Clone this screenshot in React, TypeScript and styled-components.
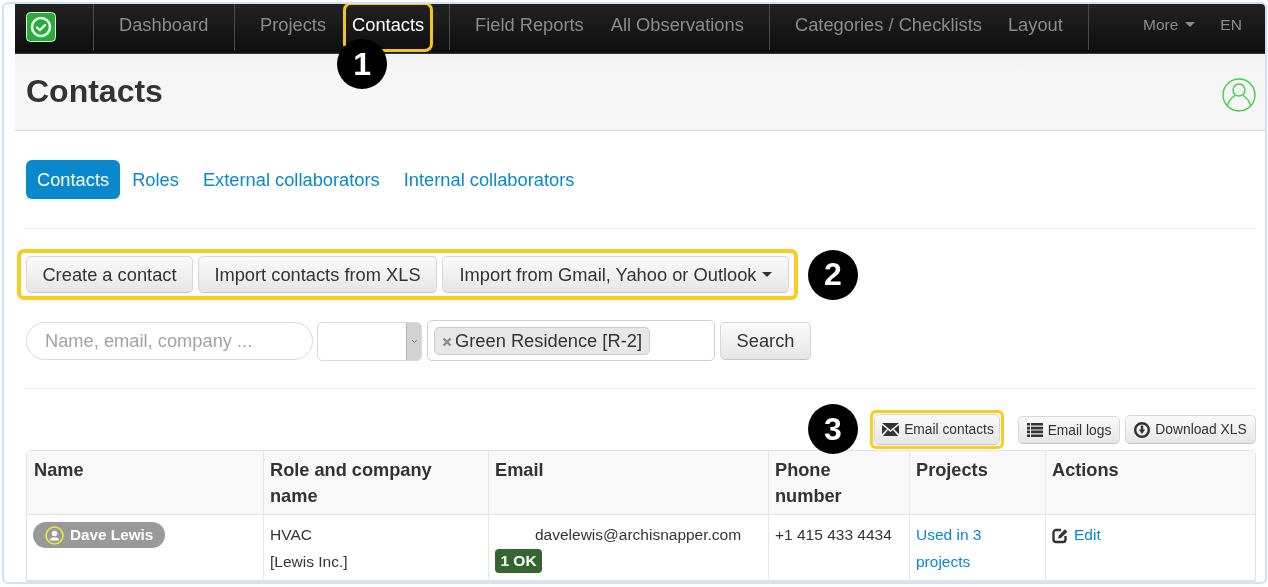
import React from "react";
import styled, { createGlobalStyle } from "styled-components";

const Global = createGlobalStyle`
  html, body { margin: 0; padding: 0; background: #fff; overflow: hidden; }
  body { font-family: "Liberation Sans", Arial, sans-serif; color: #333; }
  * { box-sizing: border-box; }
`;

const Frame = styled.div`
  margin: 2px 1px 0 2px;
  height: 582px;
  border: 2px solid #cfe2f9;
  border-radius: 6px;
  padding-left: 11px;
  overflow: hidden;
  background: #fff;
  filter: blur(0.3px);
`;

const NavBar = styled.nav`
  height: 50px;
  display: flex;
  align-items: stretch;
  background: linear-gradient(#222222, #0e0e0e);
  border-bottom: 1px solid #3a3a3a;
  font-size: 18.3px;
`;

const Brand = styled.div`
  width: 78px;
  padding: 8px 0 0 11px;
  flex: none;
`;

const NavGroup = styled.div<{ $w: number; $pad: number; $gap?: number }>`
  width: ${(p) => p.$w}px;
  flex: none;
  display: flex;
  gap: ${(p) => p.$gap ?? 0}px;
  padding: 0 0 4px ${(p) => p.$pad}px;
  height: 46px;
  align-items: center;
  border-left: 1px solid #4a4a4a;
`;

const NavLink = styled.a<{ $active?: boolean; $small?: boolean }>`
  color: ${(p) => (p.$active ? "#fff" : "#8c8c8c")};
  font-size: ${(p) => (p.$small ? "15.5px" : "inherit")};
  white-space: nowrap;
  position: relative;
`;

const HighlightedNav = styled.div`
  position: relative;
  height: 50px;
  width: 90px;
  margin-top: 4px;
  border: 3px solid #f5c518;
  border-radius: 8px;
  display: flex;
  align-items: center;
  padding: 0 0 4px 6px;
  flex: none;
`;

const Marker = styled.div`
  width: 50px;
  height: 50px;
  flex: none;
  border-radius: 50%;
  background: #000;
  color: #fff;
  font-size: 32px;
  font-weight: 700;
  display: flex;
  align-items: center;
  justify-content: center;
`;

const FloatingMarker = styled(Marker)`
  position: absolute;
  left: -9px;
  top: 34px;
  z-index: 3;
`;

const Caret = styled.span<{ $color: string; $flush?: boolean }>`
  display: inline-block;
  width: 0;
  height: 0;
  margin-left: ${(p) => (p.$flush ? 0 : 7)}px;
  vertical-align: 3px;
  border-left: 5px solid transparent;
  border-right: 5px solid transparent;
  border-top: 5px solid ${(p) => p.$color};
`;

const TitleBar = styled.header`
  height: 77px;
  background: linear-gradient(#f1f1f1, #f6f6f6 14px);
  border-bottom: 1px solid #d6d6d6;
  display: flex;
  align-items: flex-start;
  justify-content: space-between;
  padding: 17px 9px 0 11px;
`;

const Title = styled.h1`
  margin: 0;
  font-size: 32px;
  line-height: 40px;
  font-weight: 700;
  color: #333;
`;

const AvatarIcon = styled.svg`
  margin-top: 7px;
  width: 34px;
  height: 34px;
  color: #3fd03f;
`;

const Content = styled.main`
  padding: 29px 9px 0 11px;
`;

const Tabs = styled.div`
  display: flex;
  align-items: center;
  gap: 24px;
  height: 39px;
  font-size: 18.3px;
`;

const Tab = styled.a<{ $active?: boolean }>`
  color: ${(p) => (p.$active ? "#fff" : "#0a88cc")};
  background: ${(p) => (p.$active ? "#0a88cc" : "transparent")};
  padding: ${(p) => (p.$active ? "0 11px" : "0")};
  margin-right: ${(p) => (p.$active ? "-12px" : "0")};
  height: 39px;
  line-height: 40px;
  border-radius: 6px;
`;

const Rule = styled.hr<{ $top: number }>`
  margin: ${(p) => p.$top}px 0 0;
  border: none;
  border-top: 1px solid #ececec;
`;

const ActionRow = styled.div`
  display: flex;
  align-items: center;
  gap: 10px;
  margin: 20px 0 0 -9px;
`;

const HighlightBox = styled.div`
  display: flex;
  gap: 5px;
  height: 51px;
  padding: 3px 4px 0 5px;
  border: 4px solid #fbcb22;
  border-radius: 7px;
  width: 781px;
`;

const Button = styled.button<{ $w?: number; $h?: number; $size?: number }>`
  width: ${(p) => (p.$w ? `${p.$w}px` : "auto")};
  height: ${(p) => p.$h ?? 37}px;
  flex: none;
  padding: 0;
  border: 1px solid #d8d8d8;
  border-bottom-color: #c4c4c4;
  border-radius: 5px;
  background: linear-gradient(#fafafa, #e6e6e6);
  color: #333;
  font-family: inherit;
  font-size: ${(p) => p.$size ?? 18.3}px;
  display: inline-flex;
  align-items: center;
  justify-content: center;
  gap: 5px;
  white-space: nowrap;
`;

const SearchButton = styled(Button)`
  margin-left: 5px;
`;

const SearchRow = styled.div`
  display: flex;
  align-items: center;
  margin-top: 20px;
  height: 42px;
`;

const SearchInput = styled.div`
  width: 287px;
  height: 38px;
  border: 1px solid #d9d9d9;
  border-radius: 19px;
  padding-left: 18px;
  line-height: 36px;
  font-size: 18.3px;
  color: #a3a3a3;
`;

const SelectBox = styled.div`
  width: 105px;
  height: 39px;
  margin-left: 4px;
  border: 1px solid #d9d9d9;
  border-radius: 5px;
  display: flex;
  justify-content: flex-end;
  overflow: hidden;
`;

const SelectArrow = styled.div`
  width: 15px;
  background: #d2d2d2;
  border-left: 1px solid #b8b8b8;
  display: flex;
  align-items: center;
  justify-content: center;
  color: #777;
`;

const TagInput = styled.div`
  width: 288px;
  height: 41px;
  margin: -1px 0 0 5px;
  border: 1px solid #cfcfcf;
  border-radius: 5px;
  padding: 6px 0 0 6px;
`;

const Tag = styled.div`
  display: inline-flex;
  align-items: center;
  gap: 3px;
  height: 28px;
  width: 216px;
  padding: 0 0 1px 7px;
  background: #e7e7e7;
  border: 1px solid #cccccc;
  border-radius: 5px;
  font-size: 18.3px;
  white-space: nowrap;
`;

const TagClose = styled.svg`
  width: 10px;
  height: 10px;
  margin-top: 2px;
  color: #8a8a8a;
`;

const Toolbar = styled.div`
  display: flex;
  align-items: center;
  justify-content: flex-end;
  margin-top: 20px;
  height: 40px;
`;

const MailHighlight = styled.div`
  width: 134px;
  height: 39px;
  margin: 0 14px 0 12px;
  border: 3px solid #fbcb22;
  border-radius: 6px;
  padding: 1px;
`;

const MailButton = styled(Button)`
  width: 100%;
  height: 31px;
  padding: 1px 0 0 2px;
`;

const LogsButton = styled(Button)`
  margin-top: 2px;
`;

const DownloadButton = styled(Button)`
  margin: 1px 0 0 5px;
`;

const Table = styled.table`
  width: 1230px;
  margin-top: 1px;
  border-collapse: separate;
  border-spacing: 0;
  table-layout: fixed;
  border: 1px solid #e3e3e3;
  border-radius: 5px 5px 0 0;
  font-size: 15.5px;
`;

const Th = styled.th`
  height: 64px;
  padding: 6px 20px 0 6px;
  background: #f8f8f8;
  border-left: 1px solid #e6e6e6;
  border-bottom: 1px solid #e3e3e3;
  font-size: 18.2px;
  line-height: 26px;
  font-weight: 700;
  text-align: left;
  vertical-align: top;
  &:first-child { border-left: none; padding-left: 7px; }
`;

const Td = styled.td`
  height: 66px;
  padding: 7px 20px 0 6px;
  border-left: 1px solid #e6e6e6;
  border-bottom: 1px solid #e3e3e3;
  line-height: 26.6px;
  vertical-align: top;
  &:first-child { border-left: none; }
`;

const PhoneCell = styled(Td)`
  padding-right: 0;
  white-space: nowrap;
`;

const UserPill = styled.span`
  display: inline-flex;
  align-items: center;
  gap: 6px;
  height: 26px;
  width: 132px;
  padding-left: 12px;
  background: #999;
  border-radius: 13px;
  color: #fff;
  font-weight: 700;
  font-size: 15.3px;
`;

const EmailLine = styled.div`
  padding-left: 40px;
  white-space: nowrap;
`;

const StatusBadge = styled.span`
  display: block;
  width: 47px;
  height: 24px;
  border-radius: 4px;
  background: #34672f;
  color: #fff;
  font-weight: 700;
  font-size: 15.5px;
  line-height: 24px;
  text-align: center;
`;

const TableLink = styled.a`
  color: #0a88cc;
`;

const EditIcon = styled.svg`
  width: 17px;
  height: 17px;
  margin-right: 5px;
  vertical-align: -4px;
`;

const Logo = () => (
  <svg width="30" height="30" viewBox="0 0 30 30">
    <rect x="0.5" y="0.5" width="29" height="29" rx="4" fill="#28ad3a" stroke="#dfe9df" />
    <circle cx="15" cy="15" r="9" fill="none" stroke="#eef7ee" strokeWidth="2.6" />
    <path d="M11 15.5l2.8 2.6 5.2-5" fill="none" stroke="#fff" strokeWidth="2.2" strokeLinecap="round" strokeLinejoin="round" />
  </svg>
);

export default function App() {
  return (
    <>
      <Global />
      <Frame>
        <NavBar>
          <Brand><Logo /></Brand>
          <NavGroup $w={141} $pad={25}><NavLink>Dashboard</NavLink></NavGroup>
          <NavGroup $w={215} $pad={25} $gap={17}>
            <NavLink>Projects</NavLink>
            <HighlightedNav>
              <NavLink $active>Contacts</NavLink>
              <FloatingMarker>1</FloatingMarker>
            </HighlightedNav>
          </NavGroup>
          <NavGroup $w={320} $pad={25} $gap={27}>
            <NavLink>Field Reports</NavLink>
            <NavLink>All Observations</NavLink>
          </NavGroup>
          <NavGroup $w={319} $pad={25} $gap={26}>
            <NavLink>Categories / Checklists</NavLink>
            <NavLink>Layout</NavLink>
          </NavGroup>
          <NavGroup $w={177} $pad={54} $gap={25}>
            <NavLink $small>More<Caret $color="#8c8c8c" /></NavLink>
            <NavLink $small>EN</NavLink>
          </NavGroup>
        </NavBar>
        <TitleBar>
          <Title>Contacts</Title>
          <AvatarIcon viewBox="0 0 34 34" fill="none" stroke="currentColor" strokeWidth="1.4">
            <circle cx="17" cy="17" r="16" />
            <circle cx="17" cy="12" r="6" />
            <path d="M5.5 28c1-6 5-9 7.5-10.5M28.5 28c-1-6-5-9-7.5-10.5" />
          </AvatarIcon>
        </TitleBar>
        <Content>
          <Tabs>
            <Tab $active>Contacts</Tab>
            <Tab>Roles</Tab>
            <Tab>External collaborators</Tab>
            <Tab>Internal collaborators</Tab>
          </Tabs>
          <Rule $top={29} />
          <ActionRow>
            <HighlightBox>
              <Button $w={167}>Create a contact</Button>
              <Button $w={239}>Import contacts from XLS</Button>
              <Button $w={347}>Import from Gmail, Yahoo or Outlook<Caret $color="#333" $flush /></Button>
            </HighlightBox>
            <Marker>2</Marker>
          </ActionRow>
          <SearchRow>
            <SearchInput>Name, email, company ...</SearchInput>
            <SelectBox>
              <SelectArrow>
                <svg width="7" height="5" viewBox="0 0 7 5"><path d="M1 1l2.5 2.5L6 1" fill="none" stroke="currentColor" /></svg>
              </SelectArrow>
            </SelectBox>
            <TagInput>
              <Tag>
                <TagClose viewBox="0 0 10 10"><path d="M1.5 1.5l7 7M8.5 1.5l-7 7" stroke="currentColor" strokeWidth="2.2" /></TagClose>
                Green Residence [R-2]
              </Tag>
            </TagInput>
            <SearchButton $w={91} $h={38}>Search</SearchButton>
          </SearchRow>
          <Rule $top={26} />
          <Toolbar>
            <Marker>3</Marker>
            <MailHighlight>
              <MailButton $size={13.8}>
                <svg width="17" height="13" viewBox="0 0 17 13">
                  <path d="M0 0h17L8.5 7zM0 2l5 4-5 5zM17 2l-5 4 5 5zM1 13l5-6 2.5 2L11 7l5 6z" fill="#333" />
                </svg>
                Email contacts
              </MailButton>
            </MailHighlight>
            <LogsButton $w={102} $h={28} $size={13.8}>
              <svg width="16" height="14" viewBox="0 0 16 14" fill="#333">
                <path d="M0 0h3v2.6H0zM4 0h12v2.6H4zM0 3.8h3v2.6H0zM4 3.8h12v2.6H4zM0 7.6h3v2.6H0zM4 7.6h12v2.6H4zM0 11.4h3V14H0zM4 11.4h12V14H4z" />
              </svg>
              Email logs
            </LogsButton>
            <DownloadButton $w={131} $h={29} $size={13.8}>
              <svg width="16" height="16" viewBox="0 0 16 16">
                <circle cx="8" cy="8" r="6.8" fill="none" stroke="#333" strokeWidth="2.4" />
                <path d="M6.8 3.5h2.4v4h2L8 12 4.8 7.5h2z" fill="#333" />
              </svg>
              Download XLS
            </DownloadButton>
          </Toolbar>
          <Table>
            <colgroup>
              <col style={{ width: 236 }} />
              <col style={{ width: 225 }} />
              <col style={{ width: 280 }} />
              <col style={{ width: 141 }} />
              <col style={{ width: 136 }} />
              <col />
            </colgroup>
            <thead>
              <tr>
                <Th>Name</Th>
                <Th>Role and company name</Th>
                <Th>Email</Th>
                <Th>Phone number</Th>
                <Th>Projects</Th>
                <Th>Actions</Th>
              </tr>
            </thead>
            <tbody>
              <tr>
                <Td>
                  <UserPill>
                    <svg width="19" height="19" viewBox="0 0 19 19">
                      <circle cx="9.5" cy="9.5" r="8.5" fill="none" stroke="#ecec3a" strokeWidth="1.6" />
                      <circle cx="9.5" cy="7.5" r="2.8" fill="#fff" />
                      <path d="M5 14.5c0-2.5 2-3 4.5-3s4.5.5 4.5 3z" fill="#fff" />
                    </svg>
                    Dave Lewis
                  </UserPill>
                </Td>
                <Td>HVAC<br />[Lewis Inc.]</Td>
                <Td>
                  <EmailLine>davelewis@archisnapper.com</EmailLine>
                  <StatusBadge>1 OK</StatusBadge>
                </Td>
                <PhoneCell>+1 415 433 4434</PhoneCell>
                <Td><TableLink>Used in 3 projects</TableLink></Td>
                <Td>
                  <EditIcon viewBox="0 0 17 17">
                    <path d="M9 3H4a2.5 2.5 0 0 0-2.5 2.5v7A2.5 2.5 0 0 0 4 15h7a2.5 2.5 0 0 0 2.5-2.5V9" fill="none" stroke="#333" strokeWidth="2.4" />
                    <path d="M6 11.5l.8-3L13 2.3l2.4 2.4L9 11z" fill="#333" />
                  </EditIcon>
                  <TableLink>Edit</TableLink>
                </Td>
              </tr>
            </tbody>
          </Table>
        </Content>
      </Frame>
    </>
  );
}
